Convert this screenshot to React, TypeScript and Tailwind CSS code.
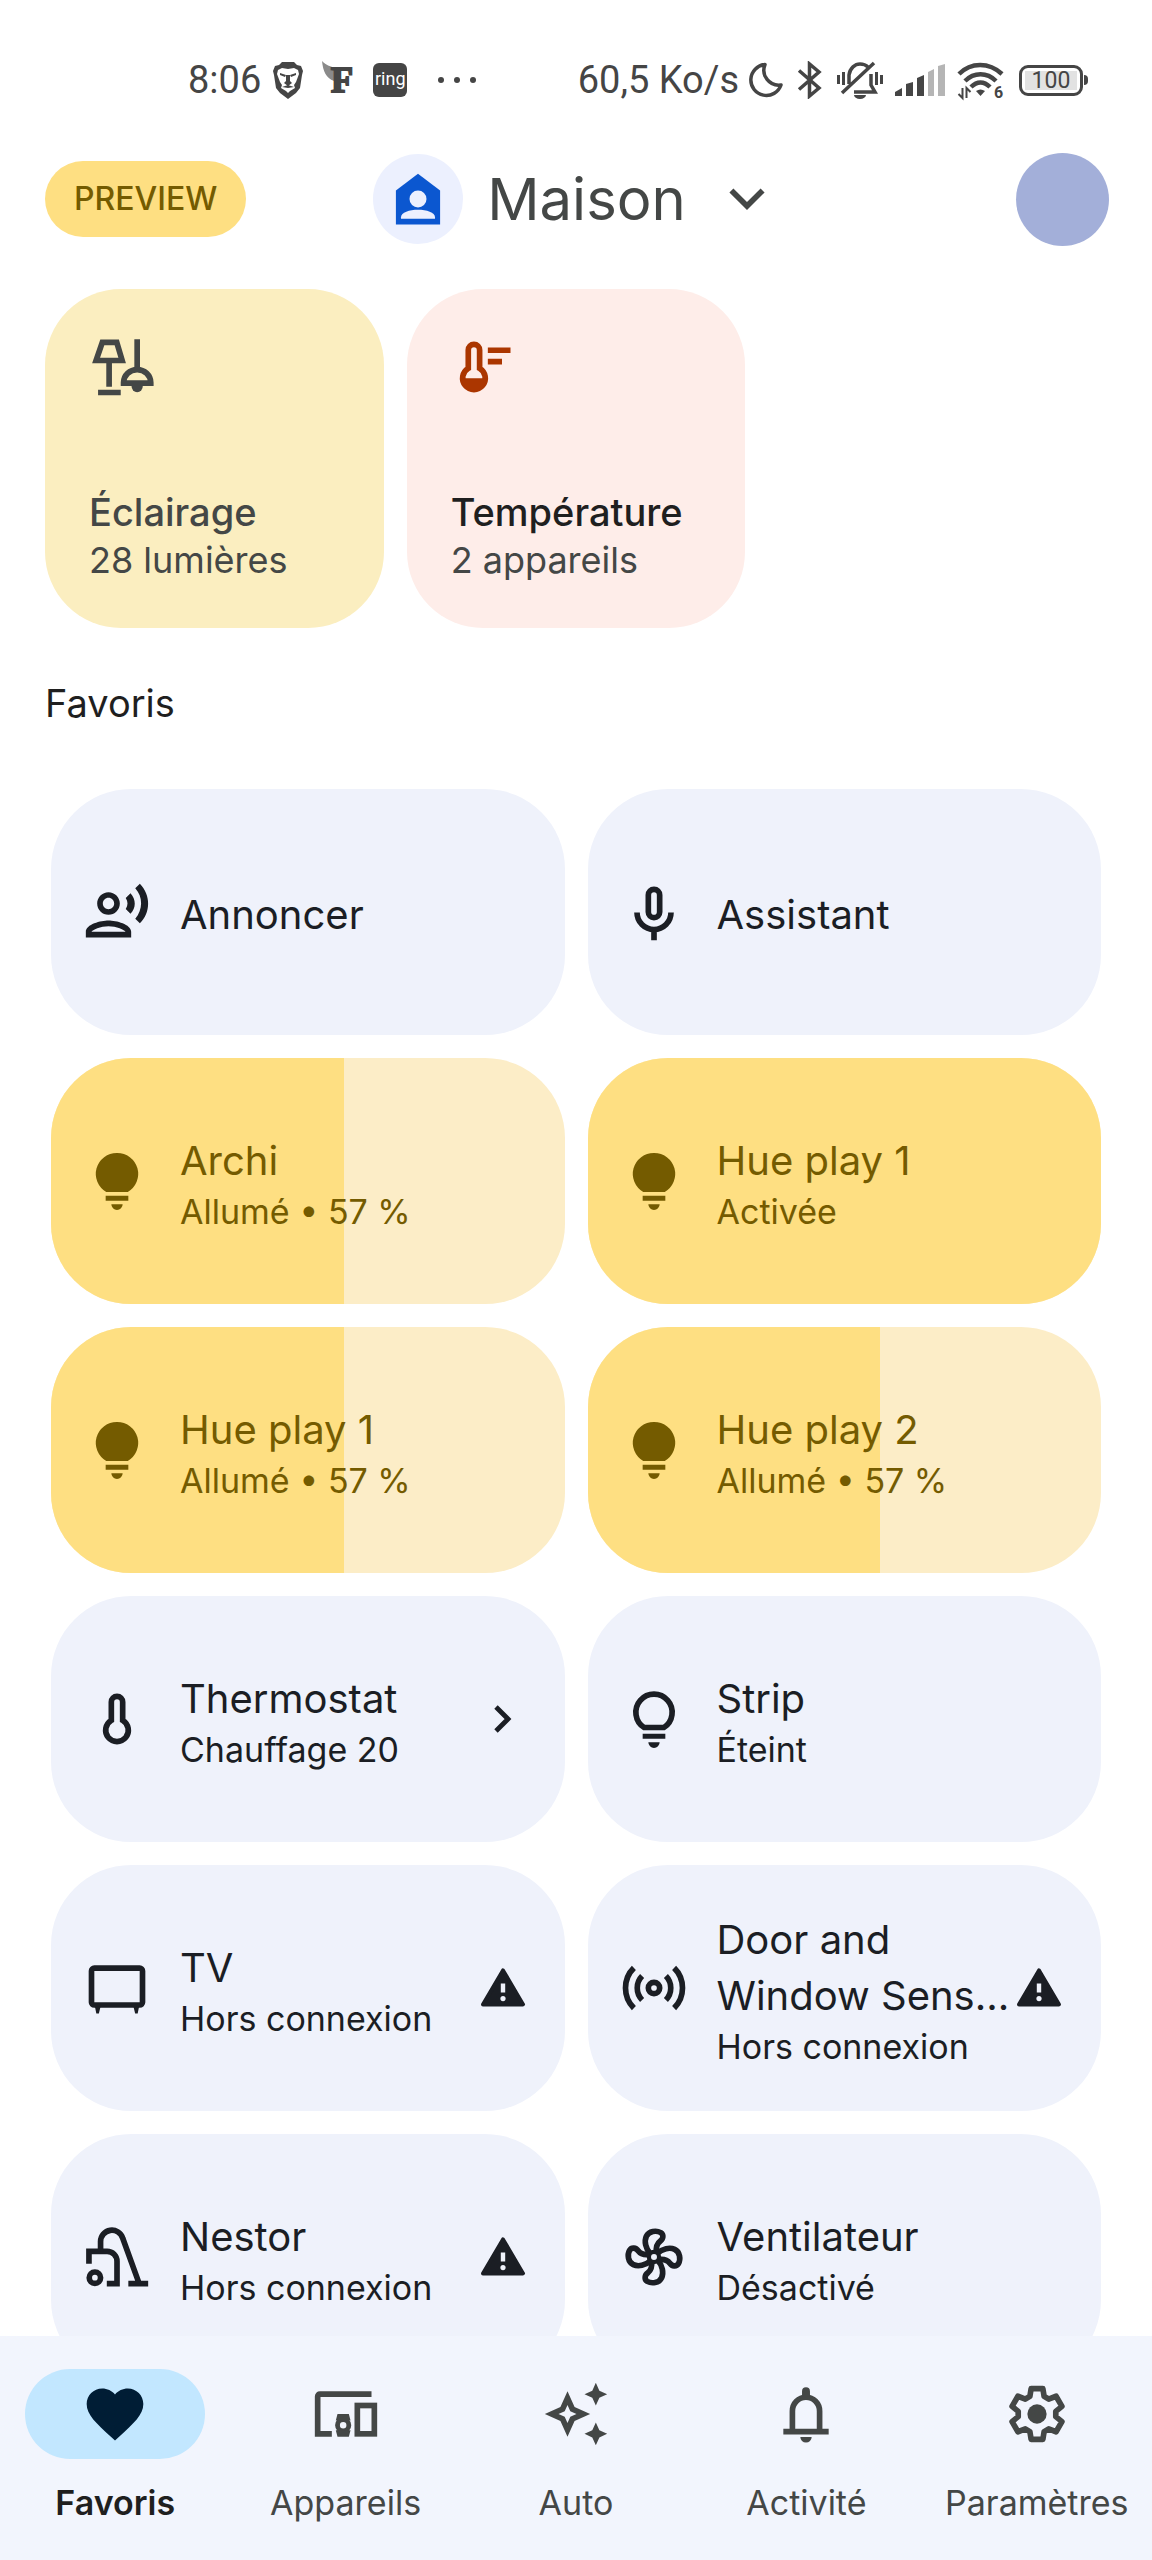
import type { ReactNode } from 'react'
import { MdFavorite, MdOutlineAutoAwesome, MdOutlineRecordVoiceOver } from 'react-icons/md'

type IconProps = { className?: string }

function Glyph({ className = 'size-[68px]', children }: { className?: string; children: ReactNode }) {
  return (
    <svg viewBox="0 0 24 24" className={className} fill="none" stroke="currentColor" strokeWidth={2} aria-hidden="true">
      {children}
    </svg>
  )
}

/* ---------- Icônes ---------- */

function LampsIcon() {
  return (
    <Glyph>
      <path d="M4.7 3.3h5.1l1.9 6.4H2.5z" />
      <path d="M7.1 10v9M3.2 21h8M17 2.2v10.5" />
      <path d="M12.2 17.7v-.2a4.8 4.6 0 0 1 9.6 0v.2z" />
      <path d="M15 18.7h4a2 2.2 0 0 1-4 0z" fill="currentColor" stroke="none" />
    </Glyph>
  )
}

function TemperatureIcon() {
  return (
    <Glyph>
      <path d="M6.1 12.5V6a2 2 0 0 1 4 0v6.5a4 4 0 1 1-4 0z" />
      <path d="M3.8 16h8.6a4.3 4.3 0 0 1-8.6 0z" fill="currentColor" stroke="none" />
      <path d="M13 6.1h8M13 10.1h5" />
    </Glyph>
  )
}

function MicIcon() {
  return (
    <Glyph>
      <rect x="10" y="4" width="4" height="10" rx="2" />
      <path d="M6 12.2a6 6 0 0 0 12 0M12 18v4" />
    </Glyph>
  )
}

function BulbIcon() {
  return (
    <Glyph>
      <g fill="currentColor" stroke="none">
        <path d="M12 2.1a7.4 7.4 0 0 0-3.8 13.8h7.6A7.4 7.4 0 0 0 12 2.1z" />
        <path d="M8 17.2h8V19H8zM10 20.2h4a2 2 0 0 1-4 0z" />
      </g>
    </Glyph>
  )
}

function BulbOutlineIcon() {
  return (
    <Glyph>
      <path d="M8.5 15h7a6.4 6.4 0 1 0-7 0z" />
      <path d="M8 17.2h8V19H8zM10 20.2h4a2 2 0 0 1-4 0z" fill="currentColor" stroke="none" />
    </Glyph>
  )
}

function ThermostatIcon() {
  return (
    <Glyph>
      <path d="M10 12.5V6a2 2 0 0 1 4 0v6.5a4 4 0 1 1-4 0z" />
    </Glyph>
  )
}

function TvIcon() {
  return (
    <Glyph>
      <rect x="3" y="5" width="18" height="13" rx="1" />
      <path d="M4.2 18.5h2l-.6 2.5h-.9zM17.8 18.5h2l-.5 2.5h-.9z" fill="currentColor" stroke="none" />
    </Glyph>
  )
}

function SensorIcon() {
  return (
    <Glyph>
      <circle cx="12" cy="12" r="2" />
      <path d="M7.8 7.8a6 6 0 0 0 0 8.4M16.2 7.8a6 6 0 0 1 0 8.4M4.9 4.9a10 10 0 0 0 0 14.2M19.1 4.9a10 10 0 0 1 0 14.2" />
    </Glyph>
  )
}

function VacuumIcon() {
  return (
    <Glyph>
      <circle cx="4.2" cy="19.3" r="2" />
      <path d="M2.1 14.4V10h6.4a3.5 3.5 0 0 1 3.5 3.5v7.8M8.4 21.4H13" />
      <path d="M6.2 10V6.5a4 4 0 0 1 7.8-1.2l5.8 16M16 21.4h7" />
    </Glyph>
  )
}

function FanIcon() {
  return (
    <Glyph>
      <circle cx="12" cy="12" r="1.8" strokeWidth={1.5} />
      {[0, 90, 180, 270].map(a => (
        <path
          key={a}
          transform={`rotate(${a} 12 12)`}
          strokeLinejoin="round"
          d="M10.7 10.9C9 9 8.5 6.4 9.3 4.7c.9-1.900 3.500-2.200 5.100-1.300 1.100.7.9 2.200-.2 3-1.200.9-1.600 2.200-1.300 4.100"
        />
      ))}
    </Glyph>
  )
}

function WarningIcon() {
  return (
    <Glyph className="size-[48px]">
      <path d="M12 3.200 22 20.200H2z" fill="currentColor" strokeLinejoin="round" />
      <path d="M12 9.800v4.400" stroke="#eff2fb" strokeWidth={2.200} />
      <circle cx="12" cy="17.300" r="1.300" fill="#eff2fb" stroke="none" />
    </Glyph>
  )
}

function ChevronRightIcon() {
  return (
    <Glyph className="size-[48px]">
      <path d="m8.500 6 6 6-6 6" strokeWidth={2.400} />
    </Glyph>
  )
}

function DevicesIcon() {
  return (
    <Glyph>
      <path d="M21 5H2.800a.8.8 0 0 0-.8.800V19h5" />
      <rect x="16" y="9" width="6" height="10" />
      <circle cx="11" cy="16" r="2" strokeWidth={1.700} />
      <path d="M9 12h4l.6 2.300H8.400zM8.400 17.700h5.200L13 20H9z" fill="currentColor" stroke="none" />
    </Glyph>
  )
}

function BellIcon() {
  return (
    <Glyph>
      <path d="M7.200 18v-7a4.800 4.900 0 0 1 9.600 0v7M4 18.200h16" />
      <path d="M10.600 5.800V4a1.400 1.400 0 0 1 2.800 0v1.800zM10 20.100h4a2 2 0 0 1-4 0z" fill="currentColor" stroke="none" />
    </Glyph>
  )
}

// Roue à six dents : chaque dent donne quatre points du contour
function GearIcon() {
  const points = [0, 60, 120, 180, 240, 300].flatMap(a =>
    [[-22, 6.7], [-13, 9.2], [13, 9.2], [22, 6.7]].map(([d, r]) => {
      const t = ((a + d) * Math.PI) / 180
      return `${(12 + r * Math.sin(t)).toFixed(2)},${(12 - r * Math.cos(t)).toFixed(2)}`
    })
  )
  return (
    <Glyph>
      <polygon points={points.join(' ')} strokeLinejoin="round" />
      <circle cx="12" cy="12" r="3.400" fill="currentColor" stroke="none" />
    </Glyph>
  )
}

/* ---------- Barre d'état ---------- */

function BraveIcon({ className }: IconProps) {
  return (
    <svg viewBox="0 0 30 37" className={className} aria-hidden="true">
      <path d="M9 0h12l3 3 4 1 2 5-1 4-2 13-4 5-8 6-8-6-4-5L1 13 0 9l2-5 4-1z" fill="#454545" />
      <path d="M5 8l4-2 6 1 6-1 4 2 1 4-3 8-2 3 1 3-5 3-2 2-2-2-5-3 1-3-2-3-3-8z" fill="#fff" />
      <path d="M7 11l6 2-1 2-5-2zM23 11l-6 2 1 2 5-2zM13 13h4v6l2 2-4 3-4-3 2-2zM9 25l6-2 6 2-6 1z" fill="#454545" />
    </svg>
  )
}

function FIcon({ className }: IconProps) {
  return (
    <svg viewBox="0 -4 36 46" className={className} aria-hidden="true">
      <path d="M0 0c5 5 9 5 12 7v13C4 17 1 10 0 0z" fill="#8a8a8a" />
      <text x="9" y="31" fontSize="36" fontWeight="700" fontFamily="Liberation Serif, serif" fill="#454545" stroke="#454545" strokeWidth="2">F</text>
    </svg>
  )
}

function StatusIcons() {
  return (
    <div className="flex items-center text-[#454545]">
      <svg viewBox="0 0 36 36" className="ml-[8px] size-[36px]" fill="none" stroke="currentColor" strokeWidth={3.500} strokeLinejoin="round" aria-hidden="true">
        <path d="M18 2.500A15.500 15.500 0 1 0 34 23 15 15 0 0 1 18 2.500z" />
      </svg>
      <svg viewBox="0 0 26 38" className="ml-[14px] h-[38px] w-[26px]" fill="none" stroke="currentColor" strokeWidth={3.500} aria-hidden="true">
        <path d="M2 9.500 22 27l-9.500 8V3L22 11 2 28.500" />
      </svg>
      <svg viewBox="0 0 46 38" className="ml-[14px] h-[38px] w-[46px]" fill="none" stroke="currentColor" strokeWidth={3} aria-hidden="true">
        <path d="M5 32 37 2M12 23V14c1-7 6-11 11-11 3 0 6 1 8 3M34 13v11l4 7H17" strokeWidth={3.500} />
        <path d="M17 34h12a6 4 0 0 1-12 0z" fill="currentColor" stroke="none" />
        <path d="M1.500 14v9M6.500 11v13M39.500 11v13M44.500 14v9" />
      </svg>
      <svg viewBox="0 0 50 32" className="ml-[12px] h-[32px] w-[50px]" fill="currentColor" aria-hidden="true">
        <path d="M0 32v-4l7-4v8zM11 20l7-2v14h-7zM22 14l7-3v21h-7z" />
        <path d="M33 8l6-3v27h-6zM43 2l7-2v32h-7z" opacity=".4" />
      </svg>
      <svg viewBox="0 -4 48 46" className="ml-[12px] h-[46px] w-[48px]" fill="none" stroke="currentColor" strokeWidth={4.500} aria-hidden="true">
        <path d="M2 13c12-12 30-12 43 0M8 20c9-9 22-9 31 0M14 26c6-6 13-6 19 0" />
        <path d="M19 30c3-2 6-2 9 0l-4.500 5z" fill="currentColor" stroke="none" />
        <path d="M5.500 27v10l-4-4M9.500 37V27l4 4" strokeWidth={2} />
        <text x="37" y="37" fontSize="16" fontWeight="700" fontFamily="Roboto, sans-serif" fill="currentColor" stroke="none">6</text>
      </svg>
      <span className="ml-[14px] flex h-[31px] w-[64px] items-center justify-center rounded-[9px] border-[3px] border-[#454545] p-[3px]">
        <span className="flex h-full w-full items-center justify-center bg-[#e2e2e2] text-[23px] leading-none">100</span>
      </span>
      <span className="ml-px h-[10px] w-[4px] rounded-r-sm bg-[#454545]" />
    </div>
  )
}

function StatusBar() {
  return (
    <div className="mt-[62px] flex h-[36px] items-center justify-between pr-[64px] pl-[188px] font-[Roboto,sans-serif] text-[38px] leading-[46px] text-[#454545]">
      <div className="flex items-center">
        <span>8:06</span>
        <BraveIcon className="ml-[12px] h-[37px] w-[30px]" />
        <FIcon className="ml-[19px] h-[46px] w-[36px]" />
        <span className="ml-[15px] flex size-[34px] items-center justify-center rounded-[6px] bg-[#454545] pb-[3px] text-[18px] leading-none text-white">ring</span>
        <span className="ml-[31px] flex gap-[10px]">
          {[0, 1, 2].map(i => <i key={i} className="size-[6px] rounded-full bg-[#454545]" />)}
        </span>
      </div>
      <div className="flex items-center">
        <span>60,5 Ko/s</span>
        <StatusIcons />
      </div>
    </div>
  )
}

/* ---------- Contenu ---------- */

function Header() {
  return (
    <header className="mt-[54px] grid h-[94px] grid-cols-[1fr_auto_1fr] items-center pr-[43px] pl-[45px]">
      <button type="button" className="flex h-[76px] items-center justify-self-start rounded-full bg-[#fedf82] px-[29px] text-[32px] leading-[48px] font-medium text-[#745b00]">
        PREVIEW
      </button>
      <button type="button" className="flex items-center gap-[24px] text-[#444746]">
        <span className="flex size-[90px] items-center justify-center rounded-full bg-[#ecf0fe] text-[#0b57d0]">
          <svg viewBox="0 0 24 24" className="size-[68px]" aria-hidden="true">
            <path d="M12 3.100 19.800 9v12H4.200V9z" fill="currentColor" />
            <circle cx="12" cy="12" r="3" fill="#ecf0fe" />
            <path d="M6 19v-.6c0-1.700 3-2.600 6-2.600s6 .9 6 2.600v.6z" fill="#ecf0fe" />
          </svg>
        </span>
        <span className="text-[58px] leading-[76px]">Maison</span>
        <Glyph className="ml-[3px] size-[68px]">
          <path d="m6.500 9 5.500 5.500L17.500 9" />
        </Glyph>
      </button>
      <button type="button" aria-label="Compte" className="size-[93px] justify-self-end rounded-full bg-[#a3afd9]" />
    </header>
  )
}

type Summary = { title: string; detail: string; icon: ReactNode; box: string; iconColor: string; titleColor: string }

const SUMMARIES: Summary[] = [
  { title: 'Éclairage', detail: '28 lumières', icon: <LampsIcon />, box: 'bg-[#fbeec0]', iconColor: 'text-[#444746]', titleColor: 'text-[#444746]' },
  { title: 'Température', detail: '2 appareils', icon: <TemperatureIcon />, box: 'bg-[#feede9]', iconColor: 'text-[#ab3600]', titleColor: 'text-[#1f1f1f]' },
]

function SummaryCard({ item }: { item: Summary }) {
  return (
    <button type="button" className={`flex aspect-square flex-col justify-between rounded-[76px] p-[44px] text-left leading-[48px] ${item.box}`}>
      <span className={item.iconColor}>{item.icon}</span>
      <span>
        <span className={`block text-[38px] font-medium ${item.titleColor}`}>{item.title}</span>
        <span className="block text-[36px] text-[#444746]">{item.detail}</span>
      </span>
    </button>
  )
}

type Device = { name: string; state?: string; icon: ReactNode; level?: number; end?: ReactNode }

const DEVICES: Device[] = [
  { name: 'Annoncer', icon: <MdOutlineRecordVoiceOver className="size-[68px]" /> },
  { name: 'Assistant', icon: <MicIcon /> },
  { name: 'Archi', state: 'Allumé • 57 %', icon: <BulbIcon />, level: 57 },
  { name: 'Hue play 1', state: 'Activée', icon: <BulbIcon />, level: 100 },
  { name: 'Hue play 1', state: 'Allumé • 57 %', icon: <BulbIcon />, level: 57 },
  { name: 'Hue play 2', state: 'Allumé • 57 %', icon: <BulbIcon />, level: 57 },
  { name: 'Thermostat', state: 'Chauffage 20', icon: <ThermostatIcon />, end: <ChevronRightIcon /> },
  { name: 'Strip', state: 'Éteint', icon: <BulbOutlineIcon /> },
  { name: 'TV', state: 'Hors connexion', icon: <TvIcon />, end: <WarningIcon /> },
  { name: 'Door and Window Sens...', state: 'Hors connexion', icon: <SensorIcon />, end: <WarningIcon /> },
  { name: 'Nestor', state: 'Hors connexion', icon: <VacuumIcon />, end: <WarningIcon /> },
  { name: 'Ventilateur', state: 'Désactivé', icon: <FanIcon /> },
]

function DeviceCard({ device }: { device: Device }) {
  const lit = device.level !== undefined
  return (
    <button
      type="button"
      className={`relative flex h-[246px] items-center overflow-hidden rounded-[80px] pr-[38px] pl-[32px] text-left ${lit ? 'bg-[#fcedc7] text-[#745b00]' : 'bg-[#eff2fb] text-[#1b1e24]'}`}
    >
      {lit && <span className="absolute inset-y-0 left-0 bg-[#fedf82]" style={{ width: `${device.level}%` }} />}
      <span className="relative shrink-0">{device.icon}</span>
      <span className="relative ml-[29px] min-w-0 flex-1 pt-[6px]">
        <span className="block text-[40px] leading-[56px]">{device.name}</span>
        {device.state && <span className="block text-[34px] leading-[46px]">{device.state}</span>}
      </span>
      {device.end && <span className="relative shrink-0">{device.end}</span>}
    </button>
  )
}

/* ---------- Navigation ---------- */

const TABS = [
  { label: 'Favoris', icon: <MdFavorite className="size-[68px]" />, active: true },
  { label: 'Appareils', icon: <DevicesIcon /> },
  { label: 'Auto', icon: <MdOutlineAutoAwesome className="size-[68px]" /> },
  { label: 'Activité', icon: <BellIcon /> },
  { label: 'Paramètres', icon: <GearIcon /> },
]

function BottomNav() {
  return (
    <nav className="grid shrink-0 grid-cols-5 bg-[#f2f5fd] pt-[33px] pb-[33px]">
      {TABS.map(t => (
        <a key={t.label} href="#" className="flex flex-col items-center gap-[20px]">
          <span className={`flex h-[90px] w-[180px] items-center justify-center rounded-full ${t.active ? 'bg-[#c2e7ff] text-[#001d35]' : 'text-[#444746]'}`}>
            {t.icon}
          </span>
          <span className={`text-[34px] leading-[48px] ${t.active ? 'font-semibold text-[#1f1f1f]' : 'text-[#444746]'}`}>{t.label}</span>
        </a>
      ))}
    </nav>
  )
}

export default function App() {
  return (
    <div className="flex h-screen flex-col bg-white font-[Inter,sans-serif]">
      <StatusBar />
      <Header />
      <main className="min-h-0 flex-1 overflow-y-auto [scrollbar-width:none]">
        <section className="mt-[43px] grid grid-cols-3 gap-[23px] px-[45px]">
          {SUMMARIES.map(s => <SummaryCard key={s.title} item={s} />)}
        </section>
        <h2 className="mt-[51px] px-[45px] text-[38px] leading-[48px] text-[#1f1f1f]">Favoris</h2>
        <section className="mt-[62px] grid grid-cols-2 gap-[23px] px-[51px]">
          {DEVICES.map((d, i) => <DeviceCard key={i} device={d} />)}
        </section>
      </main>
      <BottomNav />
    </div>
  )
}
